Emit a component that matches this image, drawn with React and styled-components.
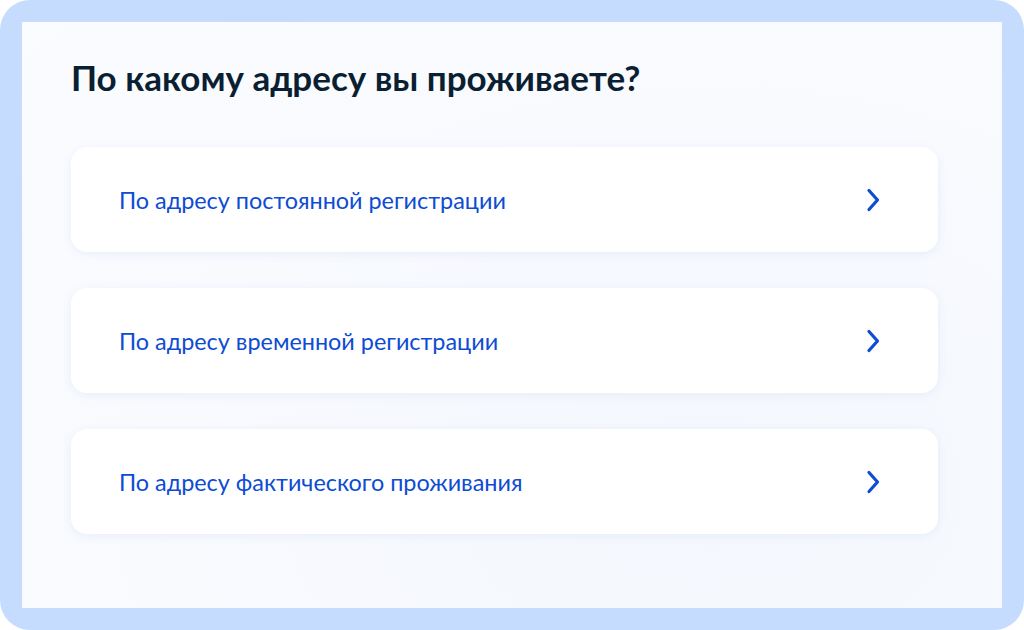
import React from "react";
import styled, { createGlobalStyle } from "styled-components";

const GlobalStyle = createGlobalStyle`
  html, body {
    margin: 0;
    padding: 0;
    background: #ffffff;
  }
  body {
    font-family: Lato, "Noto Sans", sans-serif;
  }
`;

const Frame = styled.div`
  box-sizing: border-box;
  width: 1024px;
  height: 630px;
  padding: 22px;
  border-radius: 30px;
  background: #c5dcff;
`;

const Panel = styled.section`
  box-sizing: border-box;
  height: 100%;
  padding: 31px 64px 0 49px;
  background: radial-gradient(ellipse at 70% 80%, #f4f7fd 0%, #f8fafe 60%, #fafcff 100%);
`;

const Title = styled.h1`
  margin: 0 0 46px;
  font-size: 35px;
  line-height: 48px;
  font-weight: 700;
  color: #0b1f33;
`;

const Options = styled.div`
  display: flex;
  flex-direction: column;
  gap: 36px;
`;

const Option = styled.button`
  display: flex;
  align-items: center;
  justify-content: space-between;
  box-sizing: border-box;
  width: 100%;
  height: 105px;
  padding: 0 55px 0 48px;
  border: none;
  border-radius: 16px;
  background: #ffffff;
  box-shadow: 0 2px 10px rgba(176, 196, 228, 0.2);
  cursor: pointer;
  text-align: left;
`;

const Label = styled.span`
  font-family: Lato, "Noto Sans", sans-serif;
  font-size: 23.4px;
  color: #0d4cd3;
`;

const Chevron = () => (
  <svg width="18" height="26" viewBox="0 0 18 26" fill="none">
    <path
      d="M4 3.5 L12.5 13 L4 22.5"
      stroke="#0d4cd3"
      strokeWidth="3.2"
      strokeLinecap="round"
      strokeLinejoin="round"
    />
  </svg>
);

const options = [
  "По адресу постоянной регистрации",
  "По адресу временной регистрации",
  "По адресу фактического проживания",
];

const App = () => (
  <>
    <GlobalStyle />
    <Frame>
      <Panel>
        <Title>По какому адресу вы проживаете?</Title>
        <Options>
          {options.map(label => (
            <Option key={label}>
              <Label>{label}</Label>
              <Chevron />
            </Option>
          ))}
        </Options>
      </Panel>
    </Frame>
  </>
);

export default App;
